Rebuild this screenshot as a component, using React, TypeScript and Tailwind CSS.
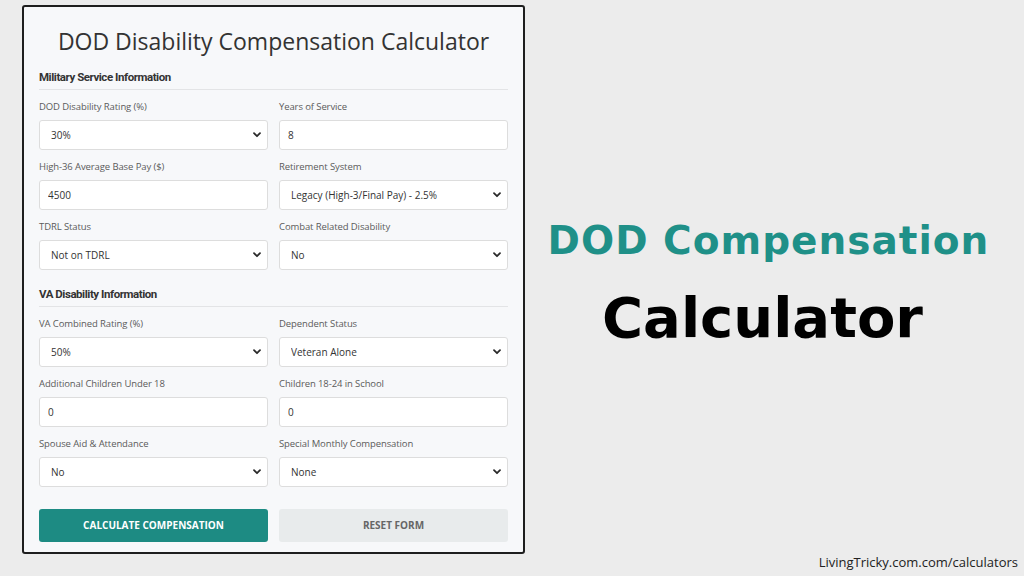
import { useState } from 'react';

const labelCls = 'block text-[9.5px] leading-[14px] tracking-[-0.1px] text-[#5b5b5b] mb-[6px]';
const fieldCls =
  'w-full h-[30px] rounded-[3px] border border-[#dddddd] bg-white text-[10px] text-[#333333] focus:outline-none';

function Chevron() {
  return (
    <svg width="8" height="6" viewBox="0 0 8 6" className="pointer-events-none absolute right-[7px] top-[12px]">
      <path d="M1 1.2l3 3 3-3" fill="none" stroke="#2b2b2b" strokeWidth="1.8" strokeLinecap="round" strokeLinejoin="round" />
    </svg>
  );
}

interface SelectFieldProps {
  label: string;
  value: string;
  options: string[];
  onChange: (v: string) => void;
}

function SelectField({ label, value, options, onChange }: SelectFieldProps) {
  return (
    <div>
      <label className={labelCls}>{label}</label>
      <div className="relative">
        <select
          value={value}
          onChange={(e) => onChange(e.target.value)}
          className={`${fieldCls} appearance-none pl-[11px] pr-6`}
        >
          {options.map((o) => (
            <option key={o}>{o}</option>
          ))}
        </select>
        <Chevron />
      </div>
    </div>
  );
}

interface InputFieldProps {
  label: string;
  value: string;
  onChange: (v: string) => void;
}

function InputField({ label, value, onChange }: InputFieldProps) {
  return (
    <div>
      <label className={labelCls}>{label}</label>
      <input
        type="number"
        value={value}
        onChange={(e) => onChange(e.target.value)}
        className={`${fieldCls} px-[8px] [appearance:textfield] [&::-webkit-inner-spin-button]:appearance-none`}
      />
    </div>
  );
}

function SectionTitle({ children }: { children: React.ReactNode }) {
  return (
    <h3
      className="text-[11.5px] leading-[16px] font-bold tracking-[-0.45px] text-[#333333] pb-[4px] border-b border-[#e3e4e6]"
      style={{ fontFamily: 'Roboto, sans-serif' }}
    >
      {children}
    </h3>
  );
}

const defaults = {
  dodRating: '30%',
  years: '8',
  pay: '4500',
  retirement: 'Legacy (High-3/Final Pay) - 2.5%',
  tdrl: 'Not on TDRL',
  combat: 'No',
  vaRating: '50%',
  dependent: 'Veteran Alone',
  kids: '0',
  school: '0',
  spouseAid: 'No',
  smc: 'None',
};

export default function App() {
  const [form, setForm] = useState(defaults);
  const set = (key: keyof typeof defaults) => (v: string) => setForm((f) => ({ ...f, [key]: v }));

  const ratings = ['0%', '10%', '20%', '30%', '40%', '50%', '60%', '70%', '80%', '90%', '100%'];

  return (
    <div className="w-[1024px] h-[576px] bg-[#ececec] flex" style={{ fontFamily: '"Open Sans", sans-serif' }}>
      {/* Calculator card */}
      <div className="ml-[22px] mt-[5px] w-[503px] h-[549px] shrink-0 border-2 border-[#1e1e1e] rounded-[3px] bg-[#f7f8fa] px-[15px] pt-[18px]">
        <h1 className="text-center text-[23px] leading-[32px] text-[#333333] mb-[12px]">
          DOD Disability Compensation Calculator
        </h1>

        <SectionTitle>Military Service Information</SectionTitle>
        <div className="grid grid-cols-2 gap-x-[11px] gap-y-[10px] mt-[10px]">
          <SelectField label="DOD Disability Rating (%)" value={form.dodRating} options={ratings} onChange={set('dodRating')} />
          <InputField label="Years of Service" value={form.years} onChange={set('years')} />
          <InputField label="High-36 Average Base Pay ($)" value={form.pay} onChange={set('pay')} />
          <SelectField
            label="Retirement System"
            value={form.retirement}
            options={['Legacy (High-3/Final Pay) - 2.5%', 'Blended Retirement System - 2.0%']}
            onChange={set('retirement')}
          />
          <SelectField label="TDRL Status" value={form.tdrl} options={['Not on TDRL', 'On TDRL']} onChange={set('tdrl')} />
          <SelectField label="Combat Related Disability" value={form.combat} options={['No', 'Yes']} onChange={set('combat')} />
        </div>

        <div className="mt-[16px]">
          <SectionTitle>VA Disability Information</SectionTitle>
        </div>
        <div className="grid grid-cols-2 gap-x-[11px] gap-y-[10px] mt-[10px]">
          <SelectField label="VA Combined Rating (%)" value={form.vaRating} options={ratings} onChange={set('vaRating')} />
          <SelectField
            label="Dependent Status"
            value={form.dependent}
            options={['Veteran Alone', 'With Spouse', 'With Spouse & Children']}
            onChange={set('dependent')}
          />
          <InputField label="Additional Children Under 18" value={form.kids} onChange={set('kids')} />
          <InputField label="Children 18-24 in School" value={form.school} onChange={set('school')} />
          <SelectField label="Spouse Aid & Attendance" value={form.spouseAid} options={['No', 'Yes']} onChange={set('spouseAid')} />
          <SelectField label="Special Monthly Compensation" value={form.smc} options={['None', 'SMC-K', 'SMC-S']} onChange={set('smc')} />
        </div>

        <div className="grid grid-cols-2 gap-x-[11px] mt-[22px]">
          <button className="h-[33px] rounded-[3px] bg-[#1d8b83] text-white text-[10px] font-bold uppercase">
            Calculate Compensation
          </button>
          <button
            onClick={() => setForm(defaults)}
            className="h-[33px] rounded-[3px] bg-[#e8ebec] text-[#666666] text-[10px] font-bold uppercase"
          >
            Reset Form
          </button>
        </div>
      </div>

      {/* Headline */}
      <div className="flex-1 flex flex-col" style={{ fontFamily: '"DejaVu Sans", sans-serif' }}>
        <div className="flex-1 flex flex-col items-center pt-[217px] pr-[12px]">
          <p className="text-[39px] leading-[48px] font-bold tracking-[1px] text-[#1f9088]">DOD Compensation</p>
          <p className="mt-[21px] pr-[12px] text-[56px] leading-[64px] font-bold text-black">Calculator</p>
        </div>
        <p
          className="self-end pr-[6px] pb-[5px] text-[13px] leading-[18px] text-[#222222]"
          style={{ fontFamily: '"Open Sans", sans-serif' }}
        >
          LivingTricky.com.com/calculators
        </p>
      </div>
    </div>
  );
}
